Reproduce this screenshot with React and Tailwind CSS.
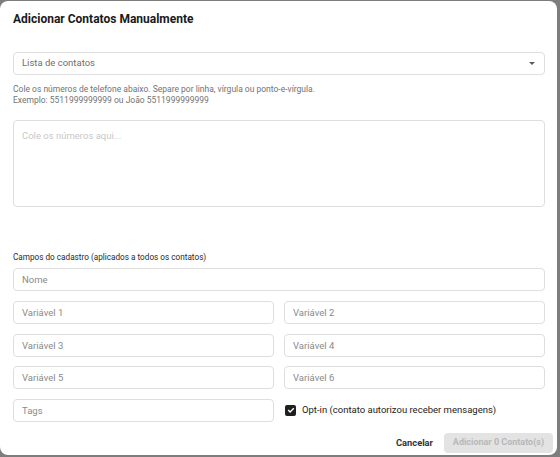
import { useState } from 'react';

const inputClass =
  'h-[23px] w-full rounded-[4px] border border-[#dedede] bg-white px-[8px] text-[9.5px] text-[#222] outline-none placeholder:text-[#8a8a8a]';

export default function App() {
  const [optIn, setOptIn] = useState(true);
  const [numbers, setNumbers] = useState('');
  const count = 0;

  return (
    <div className="h-[457px] w-[560px] overflow-hidden bg-[#7d7d7d] pt-px font-['Roboto',sans-serif]">
      <div className="flex h-[454px] w-[557px] flex-col rounded-lg bg-white">
        <div className="px-[13px] pt-[10px]">
          <h2 className="text-[12px] font-bold leading-[16px] text-[#1a1a1a]">Adicionar Contatos Manualmente</h2>
        </div>

        <div className="flex flex-col pl-[13px] pr-[12px]">
          <button
            type="button"
            className="mt-[25px] flex h-[23px] w-full items-center justify-between rounded-[4px] border border-[#dedede] pl-[8px] pr-[9px] text-left text-[9.5px] text-[#6f6f6f]"
          >
            <span>Lista de contatos</span>
            <svg width="6" height="3" viewBox="0 0 6 3">
              <path d="M0 0h6L3 3z" fill="#5a5a5a" />
            </svg>
          </button>

          <p className="mt-[8.5px] text-[8.5px] leading-[11.3px] text-[#737373]">
            Cole os números de telefone abaixo. Separe por linha, vírgula ou ponto-e-vírgula.
            <br />
            Exemplo: 5511999999999 ou João 5511999999999
          </p>

          <textarea
            value={numbers}
            onChange={(e) => setNumbers(e.target.value)}
            placeholder="Cole os números aqui..."
            className="mt-[14px] h-[87px] w-full resize-none rounded-[4px] border border-[#dedede] px-[8px] pt-[9px] text-[9.5px] leading-[12px] text-[#222] outline-none placeholder:text-[#c8c8c8]"
          />

          <div className="mt-[44.5px] text-[8.2px] leading-[11px] text-[#2a2a2a]">
            Campos do cadastro (aplicados a todos os contatos)
          </div>

          <input placeholder="Nome" className={`mt-[5px] ${inputClass}`} />

          <div className="mt-[10.5px] grid grid-cols-2 gap-x-[10px] gap-y-[9.5px]">
            <input placeholder="Variável 1" className={inputClass} />
            <input placeholder="Variável 2" className={inputClass} />
            <input placeholder="Variável 3" className={inputClass} />
            <input placeholder="Variável 4" className={inputClass} />
            <input placeholder="Variável 5" className={inputClass} />
            <input placeholder="Variável 6" className={inputClass} />
            <input placeholder="Tags" className={inputClass} />
            <label className="flex cursor-pointer items-center gap-[6px] pl-[1px] text-[9.5px] text-[#222]">
              <span
                onClick={() => setOptIn((v) => !v)}
                className={`flex h-[11px] w-[11px] items-center justify-center rounded-[2px] ${
                  optIn ? 'bg-[#1f1f1f]' : 'border border-[#777] bg-white'
                }`}
              >
                {optIn && (
                  <svg width="8" height="8" viewBox="0 0 8 8">
                    <path d="M1.2 4.1l1.9 1.9L6.8 2.2" fill="none" stroke="#fff" strokeWidth="1.4" />
                  </svg>
                )}
              </span>
              Opt-in (contato autorizou receber mensagens)
            </label>
          </div>
        </div>

        <div className="mt-[11px] flex items-center justify-end gap-[11px] pr-[4px]">
          <button type="button" className="text-[9.3px] font-bold text-[#333]">
            Cancelar
          </button>
          <button
            type="button"
            disabled
            className="h-[20px] w-[109px] rounded-[4px] bg-[#e3e3e3] text-[9px] font-bold text-[#b8b8b8]"
          >
            Adicionar {count} Contato(s)
          </button>
        </div>
      </div>
    </div>
  );
}
